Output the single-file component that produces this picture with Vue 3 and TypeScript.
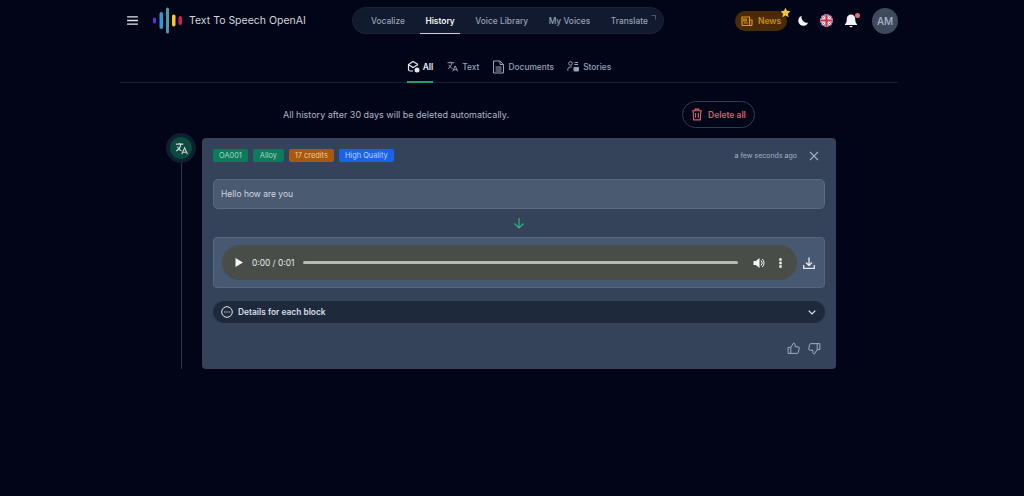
<template>
  <div class="page">
    <header class="topbar">
      <div class="brand">
        <svg class="burger" width="11" height="9" viewBox="0 0 12 10"><path d="M0 1h12M0 5h12M0 9h12" stroke="#e5e7eb" stroke-width="1.500" /></svg>
        <svg class="logo" width="30" height="27" viewBox="0 0 30 27">
          <rect x="0" y="10.500" width="3" height="6" rx="1.500" fill="#6d28d9" />
          <rect x="6.500" y="5" width="3.500" height="17" rx="1.700" fill="#2b9bd8" />
          <rect x="13" y="0.500" width="3" height="26" rx="1.500" fill="#4f9aa5" />
          <rect x="19" y="7.500" width="3.500" height="12" rx="1.700" fill="#f2cc2f" />
          <rect x="25.500" y="9" width="3.500" height="9" rx="1.700" fill="#d11f5d" />
        </svg>
        <span class="brand-name">Text To Speech OpenAI</span>
      </div>

      <nav class="main-nav">
        <a v-for="item in navItems" :key="item" class="nav-item" :class="{ active: item === 'History' }">
          {{ item }}
          <svg v-if="item === 'Translate'" class="ext" width="5" height="5" viewBox="0 0 5 5"><path d="M0.500 0.500h4v4" fill="none" stroke="#64748b" stroke-width="0.700" /></svg>
        </a>
      </nav>

      <div class="actions">
        <div class="news">
          <svg width="12" height="12" viewBox="0 0 12 12" fill="none" stroke="#d99a1c" stroke-width="1.200">
            <path d="M1 2h7.500v8.500H2a1 1 0 0 1-1-1zM8.500 5H11v4.500a1 1 0 0 1-2.500 0" />
            <path d="M2.800 4h2.400v2H2.800zM2.800 8h4" />
          </svg>
          <span>News</span>
          <svg class="star" width="11" height="11" viewBox="0 0 24 24"><path d="M12 1.500l3.300 6.900 7.500 1-5.500 5.200 1.400 7.500L12 18.500l-6.700 3.600 1.400-7.500L1.200 9.400l7.500-1z" fill="#f0c53a" /></svg>
        </div>
        <svg width="12" height="12" viewBox="0 0 14 14"><path d="M5.500 1a6 6 0 1 0 7.500 8A6.500 6.500 0 0 1 5.500 1z" fill="#f3f4f6" /></svg>
        <svg class="flag" width="13" height="13" viewBox="0 0 13 13">
          <defs><clipPath id="flag-clip"><circle cx="6.500" cy="6.500" r="6.500" /></clipPath></defs>
          <g clip-path="url(#flag-clip)">
            <rect width="13" height="13" fill="#2c3f80" />
            <path d="M0 0l13 13M13 0L0 13" stroke="#f1e6ea" stroke-width="2.600" />
            <path d="M0 0l13 13M13 0L0 13" stroke="#c8395a" stroke-width="0.800" />
            <path d="M6.500 0v13M0 6.500h13" stroke="#f1e6ea" stroke-width="4" />
            <path d="M6.500 0v13M0 6.500h13" stroke="#cf2e4e" stroke-width="2.200" />
          </g>
        </svg>
        <div class="bell">
          <svg width="14" height="15" viewBox="0 0 14 15"><path d="M7 1.500A4.200 4.200 0 0 0 2.800 5.700c0 3.300-1 4.600-1.800 5.500v.8h12v-.8c-.8-.9-1.800-2.200-1.800-5.500A4.200 4.200 0 0 0 7 1.500zM5.300 13a1.800 1.800 0 0 0 3.400 0z" fill="#f3f4f6" /></svg>
          <i class="bell-dot"></i>
        </div>
        <div class="avatar">AM</div>
      </div>
    </header>

    <div class="tabs">
      <a class="tab active">
        <svg width="13" height="13" viewBox="0 0 13 13" fill="none" stroke="#e5e7eb" stroke-width="1.200">
          <path d="M11 4.500L6 1.500 1.500 4.500v5A1.500 1.500 0 0 0 3 11h3M1.500 4.500L6 7.500l5-3" />
          <circle cx="10" cy="10" r="2.500" fill="#e5e7eb" stroke="none" />
        </svg>
        All
      </a>
      <a class="tab">
        <svg width="13" height="13" viewBox="0 0 24 24" fill="none" stroke="#94a3b8" stroke-width="1.800"><path d="M3 5h12M9 3v2m2 0c-.8 5-3.600 9-7.500 11M5.500 9c1 3 3.500 5.500 6.500 6.500M12.500 21l4.500-10 4.500 10M14 18h6" /></svg>
        Text
      </a>
      <a class="tab">
        <svg width="13" height="14" viewBox="0 0 13 14" fill="none" stroke="#94a3b8" stroke-width="1"><path d="M1.500 1h6.500l3.500 3.500V13h-10zM8 1v3.500h3.500M3.500 7h6M3.500 9h6M3.500 11h6" /></svg>
        Documents
      </a>
      <a class="tab">
        <svg width="13" height="11" viewBox="0 0 13 11" fill="none" stroke="#94a3b8" stroke-width="1"><circle cx="3.500" cy="2.500" r="1.800" /><path d="M7.500 1.500h3.500M7.500 3.500h3.500M0.800 9.500V8a2.500 2.500 0 0 1 2.500-2h1.500" /><rect x="6.500" y="6" width="5.500" height="4.500" rx="1" fill="#94a3b8" stroke="none" /></svg>
        Stories
      </a>
    </div>

    <div class="notice">
      <p>All history after 30 days will be deleted automatically.</p>
      <button class="delete-all">
        <svg width="12" height="13" viewBox="0 0 13 14" fill="none" stroke="#d5626b" stroke-width="1.200"><path d="M1 3h11M4.500 3V1.200h4V3M2.300 3l.6 9.800h7.200l.6-9.800M5 5.500v5M8 5.500v5" /></svg>
        Delete all
      </button>
    </div>

    <div class="history">
      <div class="rail">
        <div class="rail-badge">
          <svg width="15" height="15" viewBox="0 0 24 24" fill="none" stroke="#d1d5db" stroke-width="1.800"><path d="M3 5h12M9 3v2m2 0c-.8 5-3.600 9-7.500 11M5.500 9c1 3 3.500 5.500 6.500 6.500M12.500 21l4.500-10 4.500 10M14 18h6" /></svg>
        </div>
        <div class="rail-line"></div>
      </div>

      <article class="card">
        <div class="card-head">
          <div class="tags">
            <span class="tag green">OA001</span>
            <span class="tag green wide">Alloy</span>
            <span class="tag orange">17 credits</span>
            <span class="tag blue">High Quality</span>
          </div>
          <div class="card-meta">
            <span>a few seconds ago</span>
            <svg width="10" height="10" viewBox="0 0 10 10"><path d="M1 1l8 8M9 1L1 9" stroke="#a3b0c2" stroke-width="1.100" /></svg>
          </div>
        </div>

        <div class="input-box">Hello how are you</div>

        <svg class="arrow" width="12" height="12" viewBox="0 0 12 12" fill="none" stroke="#34b27b" stroke-width="1.200"><path d="M6 1v10M1.500 6.500L6 11l4.500-4.500" /></svg>

        <div class="audio-box">
          <div class="player">
            <svg width="8" height="9" viewBox="0 0 8 9"><path d="M0.500 0v9L8 4.500z" fill="#f3f4f6" /></svg>
            <span class="time">0:00 / 0:01</span>
            <div class="track"></div>
            <svg width="12" height="12" viewBox="0 0 12 12"><path d="M0.500 4v4h2.300L6.500 11V1L2.800 4z" fill="#f3f4f6" /><path d="M8 3.500a3.500 3.500 0 0 1 0 5M9.300 2a5.500 5.500 0 0 1 0 8" fill="none" stroke="#f3f4f6" stroke-width="1" /></svg>
            <svg class="more" width="3" height="10" viewBox="0 0 3 10"><path d="M0.300 0.300h2.400v2.400H0.300zM0.300 3.800h2.400v2.400H0.300zM0.300 7.300h2.400v2.400H0.300z" fill="#f3f4f6" /></svg>
          </div>
          <svg width="12" height="12" viewBox="0 0 12 12" fill="none" stroke="#e2e8f0" stroke-width="1.300"><path d="M6 0.500v7.500M3 5.500L6 8.500l3-3M0.700 8v3.300h10.600V8" /></svg>
        </div>

        <div class="details">
          <div class="details-left">
            <svg width="12" height="12" viewBox="0 0 12 12"><circle cx="6" cy="6" r="5.300" fill="none" stroke="#e5e7eb" stroke-width="1" /><path d="M3.200 6h1.200M5.400 6h1.200M7.600 6h1.200" stroke="#e5e7eb" stroke-width="1" /></svg>
            Details for each block
          </div>
          <svg width="8" height="5" viewBox="0 0 8 5"><path d="M0.700 0.700L4 4l3.300-3.300" fill="none" stroke="#e5e7eb" stroke-width="1.200" /></svg>
        </div>

        <div class="rating">
          <svg width="13" height="13" viewBox="0 0 24 24" fill="none" stroke="#a3b0c2" stroke-width="1.800"><path d="M7 10v11H2V10zM7 10l5-8c2 0 3 1.200 3 3v4h6c1 0 2 1 1.700 2.200l-1.700 8c-.2 1-1 1.800-2 1.800H7" /></svg>
          <svg width="13" height="13" viewBox="0 0 24 24" fill="none" stroke="#a3b0c2" stroke-width="1.800"><path d="M17 14V3h5v11zM17 14l-5 8c-2 0-3-1.200-3-3v-4H3c-1 0-2-1-1.700-2.200l1.700-8C3.200 3.800 4 3 5 3h12" /></svg>
        </div>
      </article>
    </div>
  </div>
</template>

<script setup lang="ts">
const navItems: string[] = ['Vocalize', 'History', 'Voice Library', 'My Voices', 'Translate']
</script>

<style>
html,
body {
  background: #020418;
}
</style>

<style scoped>
.page {
  width: 778px;
  height: 496px;
  margin-left: 120px;
  font-family: Inter, "Liberation Sans", sans-serif;
  color: #e5e7eb;
  overflow: hidden;
}

.topbar {
  display: flex;
  align-items: center;
  height: 27px;
  padding: 7px 0 0 7px;
}

.brand {
  display: flex;
  align-items: center;
  flex: none;
  width: 225px;
}

.burger {
  margin-right: 15px;
}

.logo {
  margin-right: 6px;
}

.brand-name {
  font-size: 10.500px;
  color: #d1d5db;
  white-space: nowrap;
}

.main-nav {
  display: flex;
  align-items: center;
  flex: none;
  gap: 20.500px;
  width: 312px;
  height: 27px;
  padding: 0 18px;
  box-sizing: border-box;
  background: #111a2e;
  border: 1px solid #1a2438;
  border-radius: 14px;
}

.nav-item {
  display: flex;
  position: relative;
  height: 100%;
  align-items: center;
  font-size: 8.400px;
  font-weight: 500;
  color: #94a3b8;
  white-space: nowrap;
}

.nav-item.active {
  color: #f3f4f6;
  font-weight: 600;
}

.nav-item.active::after {
  content: "";
  position: absolute;
  left: -5px;
  right: -5px;
  bottom: -1px;
  height: 1px;
  background: #d1d5db;
}

.ext {
  margin: -6px 0 0 3px;
}

.actions {
  display: flex;
  align-items: center;
  margin-left: auto;
  width: 163px;
}

.news {
  position: relative;
  display: flex;
  align-items: center;
  gap: 5px;
  height: 20px;
  padding: 0 0 0 6px;
  width: 52px;
  box-sizing: border-box;
  background: #4a2b05;
  border-radius: 10px;
  font-size: 8.500px;
  font-weight: 600;
  color: #c98d1d;
  margin-right: 10px;
}

.star {
  position: absolute;
  top: -4px;
  right: -4px;
}

.flag {
  margin-left: 11px;
}

.bell {
  position: relative;
  display: flex;
  margin-left: 11px;
}

.bell-dot {
  position: absolute;
  top: 0;
  right: -2px;
  width: 5px;
  height: 5px;
  border-radius: 50%;
  background: #e26d78;
}

.avatar {
  display: flex;
  align-items: center;
  justify-content: center;
  width: 26px;
  height: 26px;
  margin-left: auto;
  border-radius: 50%;
  background: #3e4a5c;
  color: #aab4c2;
  font-size: 10px;
  font-weight: 500;
}

.tabs {
  display: flex;
  justify-content: center;
  gap: 13px;
  height: 49px;
  box-sizing: border-box;
  border-bottom: 1px solid #1a2130;
}

.tab {
  display: flex;
  align-items: center;
  align-self: flex-end;
  gap: 3px;
  height: 31px;
  font-size: 8.400px;
  font-weight: 500;
  color: #94a3b8;
  box-sizing: border-box;
}

.tab.active {
  font-weight: 600;
  color: #f3f4f6;
  border-bottom: 2px solid #22a06b;
  margin-bottom: -1px;
}

.notice {
  display: flex;
  align-items: center;
  height: 29px;
  margin-top: 17px;
  padding-left: 163px;
}

.notice p {
  margin: 0;
  width: 399px;
  font-size: 9px;
  color: #aeb8c6;
  white-space: nowrap;
}

.delete-all {
  display: flex;
  align-items: center;
  gap: 5px;
  width: 73px;
  height: 27px;
  padding: 0 0 0 8px;
  box-sizing: border-box;
  background: transparent;
  border: 1px solid #333c4d;
  border-radius: 14px;
  font-family: inherit;
  font-size: 8.500px;
  font-weight: 600;
  color: #d5626b;
  white-space: nowrap;
}

.history {
  display: flex;
  margin-top: 9px;
  padding-left: 46px;
}

.rail {
  display: flex;
  flex-direction: column;
  align-items: center;
  width: 30px;
  margin-top: -5px;
  margin-right: 6px;
}

.rail-badge {
  display: flex;
  align-items: center;
  justify-content: center;
  flex: none;
  width: 22px;
  height: 22px;
  border: 4px solid #0c2030;
  border-radius: 50%;
  background: #0b4a3c;
}

.rail-line {
  flex: 1;
  width: 1px;
  background: #2c3647;
}

.card {
  display: flex;
  flex-direction: column;
  width: 634px;
  height: 231px;
  padding: 0 11px;
  box-sizing: border-box;
  background: #34435a;
  border-radius: 4px;
}

.card-head {
  display: flex;
  align-items: center;
  justify-content: space-between;
  height: 35px;
  flex: none;
}

.tags {
  display: flex;
  gap: 5px;
}

.tag {
  display: flex;
  align-items: center;
  justify-content: center;
  height: 13px;
  padding: 0 6px;
  border-radius: 2px;
  font-size: 7.400px;
  color: #cbd5e1;
  white-space: nowrap;
}

.tag.wide {
  min-width: 31px;
  box-sizing: border-box;
}

.tag.green {
  background: #0d7a5a;
  color: #a9d8c4;
}

.tag.orange {
  background: #a8590c;
  color: #f0c7a0;
}

.tag.blue {
  background: #1a62e8;
  color: #bcd2fa;
}

.card-meta {
  display: flex;
  align-items: center;
  gap: 12px;
  margin-right: 6px;
  font-size: 7px;
  color: #a3b0c2;
}

.input-box {
  display: flex;
  align-items: center;
  height: 30px;
  margin-top: 6px;
  padding: 0 7px;
  box-sizing: border-box;
  flex: none;
  background: #4a5a70;
  border: 1px solid #5a6a80;
  border-radius: 5px;
  font-size: 8.500px;
  color: #d1d8e2;
}

.arrow {
  align-self: center;
  flex: none;
  margin: 8px 0;
}

.audio-box {
  display: flex;
  align-items: center;
  justify-content: space-between;
  flex: none;
  height: 51px;
  padding: 0 9px 0 8px;
  box-sizing: border-box;
  background: #475872;
  border: 1px solid #55667f;
  border-radius: 4px;
}

.player {
  display: flex;
  align-items: center;
  width: 575px;
  height: 35px;
  padding: 0 15px 0 13px;
  box-sizing: border-box;
  background: #484e47;
  border-radius: 18px;
}

.time {
  margin-left: 9px;
  font-size: 8.400px;
  color: #e5e7eb;
  white-space: nowrap;
}

.track {
  flex: 1;
  height: 3px;
  margin: 0 15px 0 9px;
  border-radius: 2px;
  background: #b4bdae;
}

.more {
  margin-left: 14px;
}

.details {
  display: flex;
  align-items: center;
  justify-content: space-between;
  flex: none;
  height: 22px;
  margin-top: 13px;
  padding: 0 9px 0 8px;
  box-sizing: border-box;
  background: #1f293c;
  border-radius: 11px;
}

.details-left {
  display: flex;
  align-items: center;
  gap: 5px;
  font-size: 8.400px;
  font-weight: 600;
  color: #d9dfe8;
}

.rating {
  display: flex;
  justify-content: flex-end;
  gap: 8px;
  margin-top: 19px;
  padding-right: 4px;
}
</style>
